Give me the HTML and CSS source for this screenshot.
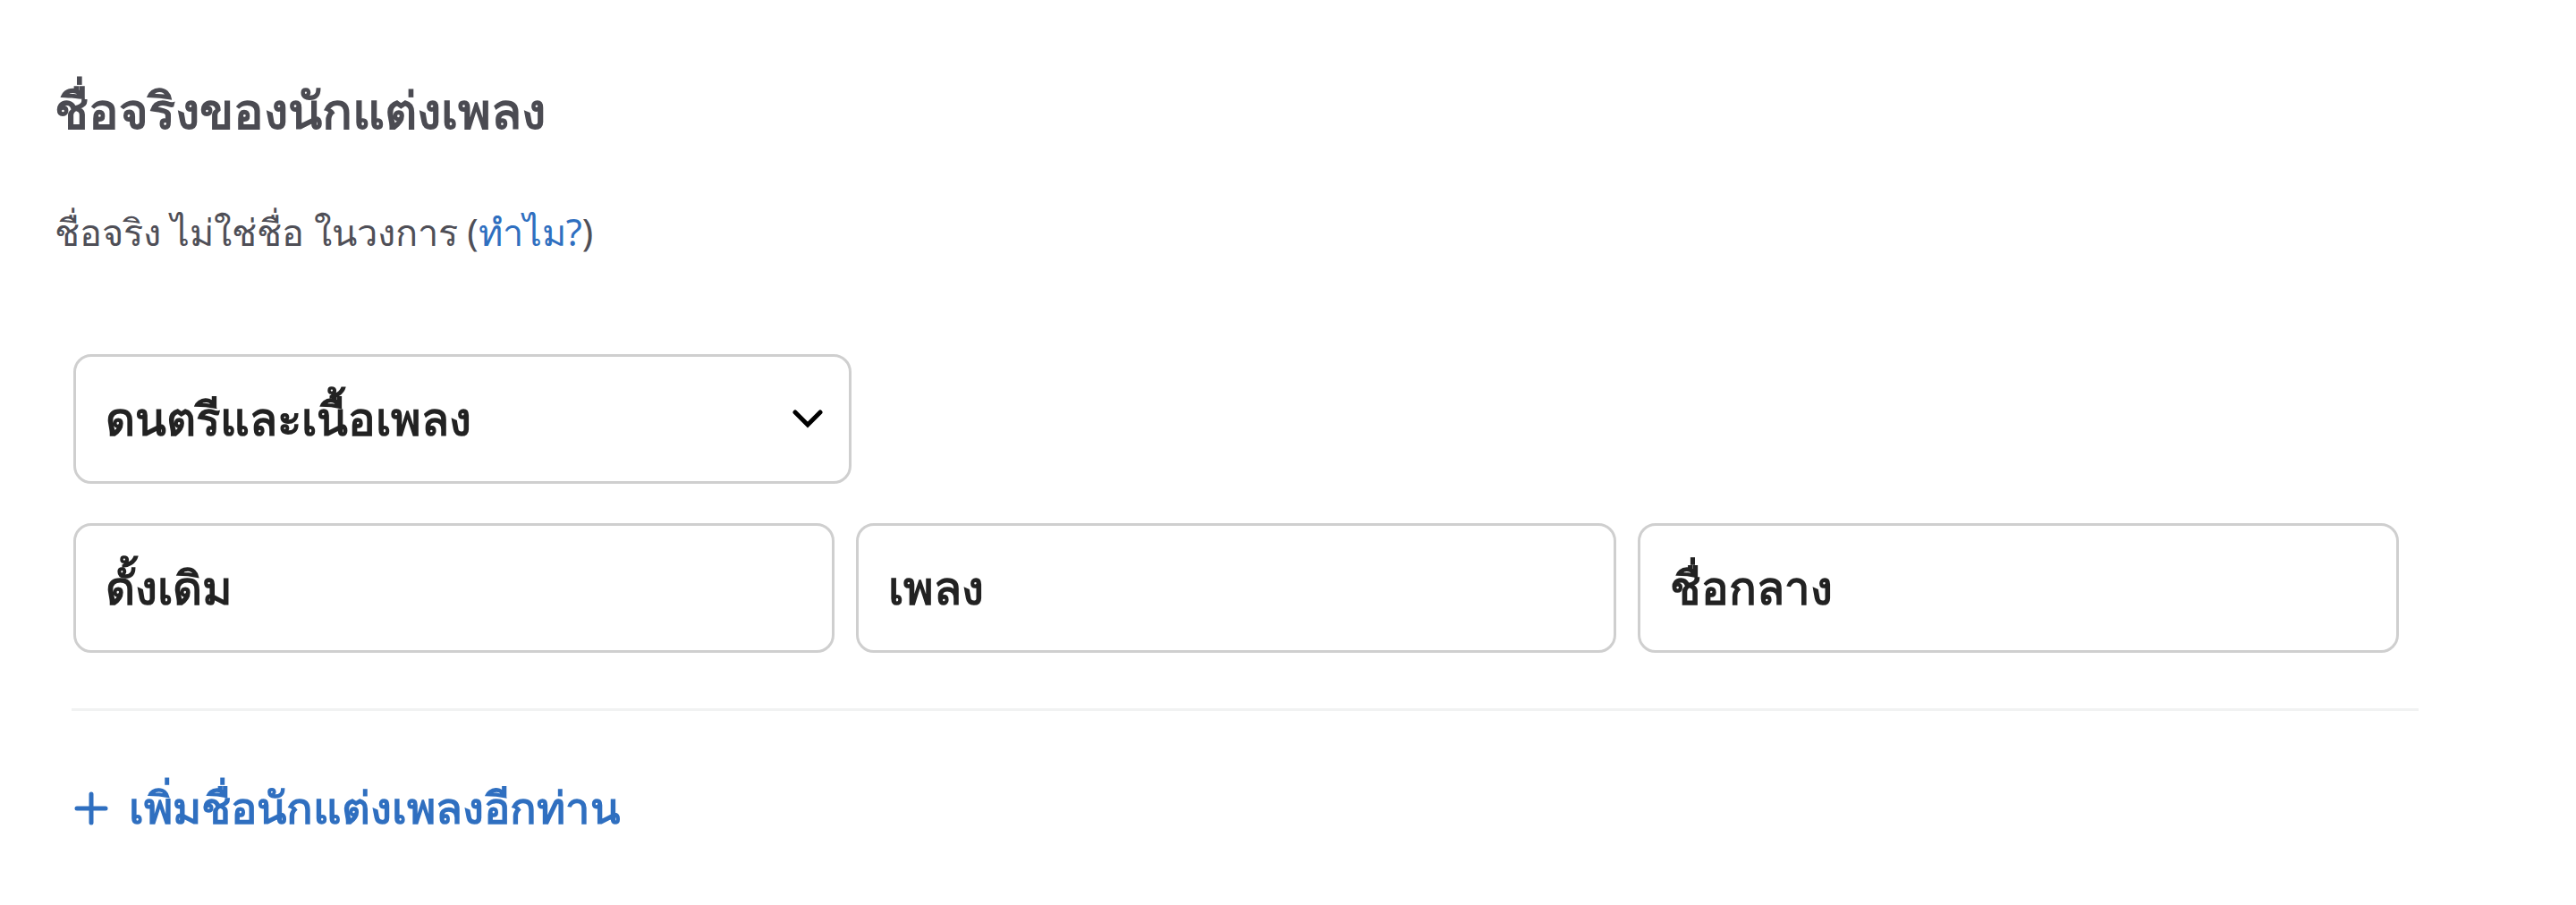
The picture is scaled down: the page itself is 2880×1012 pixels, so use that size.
FILE: index.html
```html
<!DOCTYPE html>
<html lang="th">
<head>
<meta charset="utf-8">
<title>ชื่อจริงของนักแต่งเพลง</title>
<link rel="stylesheet" href="styles.css">
</head>
<body>
<section class="writer-section">
  <h2 class="section-title">ชื่อจริงของนักแต่งเพลง</h2>
  <p class="section-hint">ชื่อจริง ไม่ใช่ชื่อ ในวงการ (<a class="hint-link" href="#">ทำไม?</a>)</p>

  <div class="writer-form">
    <div class="role-select">
      <span class="field-text">ดนตรีและเนื้อเพลง</span>
      <svg class="chevron" width="34" height="22" viewBox="0 0 34 22" aria-hidden="true">
        <path d="M3 3 L17 17 L31 3" fill="none" stroke="#000" stroke-width="5" stroke-linecap="round" stroke-linejoin="miter"/>
      </svg>
    </div>

    <div class="name-row">
      <div class="name-field"><span class="field-text">ดั้งเดิม</span></div>
      <div class="name-field"><span class="field-text">เพลง</span></div>
      <div class="name-field"><span class="field-text">ชื่อกลาง</span></div>
    </div>

    <hr class="divider">

    <a class="add-writer" href="#">
      <svg class="plus" width="40" height="40" viewBox="0 0 40 40" aria-hidden="true">
        <path d="M20 4 V36 M4 20 H36" stroke="#2f6fc0" stroke-width="5" stroke-linecap="round"/>
      </svg>
      <span>เพิ่มชื่อนักแต่งเพลงอีกท่าน</span>
    </a>
  </div>
</section>
</body>
</html>
```

FILE: styles.css
```css
html, body {
  margin: 0;
  padding: 0;
  background: #ffffff;
}

body {
  font-family: "Noto Sans", "Liberation Sans", sans-serif;
  color: #222222;
}

.writer-section {
  padding: 82px 0 0 61px;
  width: 2643px;
}

.section-title {
  margin: 0;
  font-size: 56px;
  font-weight: 700;
  line-height: 80px;
  color: #4b4b52;
}

.section-hint {
  margin: 67px 0 0;
  font-size: 41.5px;
  line-height: 60px;
  color: #4f4f57;
}

.hint-link {
  color: #2f6fc0;
  text-decoration: none;
}

.writer-form {
  margin: 107px 0 0 21px;
  display: flex;
  flex-direction: column;
}

.role-select,
.name-field {
  box-sizing: border-box;
  height: 145px;
  border: 3px solid #cfcfcf;
  border-radius: 20px;
  background: #fff;
  display: flex;
  align-items: center;
  padding: 0 33px;
}

.role-select {
  width: 870px;
  justify-content: space-between;
}

.chevron {
  margin-right: -4px;
}

.field-text {
  font-size: 51px;
  font-weight: 700;
  color: #222222;
}

.name-row {
  margin-top: 44px;
  display: grid;
  grid-template-columns: repeat(3, 1fr);
  column-gap: 24px;
  padding-right: 22px;
}

.divider {
  margin: 62px 0 0 -2px;
  border: 0;
  height: 3px;
  background: #f1f2f2;
}

.add-writer {
  margin-top: 70px;
  display: flex;
  align-items: center;
  gap: 22px;
  color: #2f6fc0;
  text-decoration: none;
  font-size: 49px;
  font-weight: 700;
}
```
